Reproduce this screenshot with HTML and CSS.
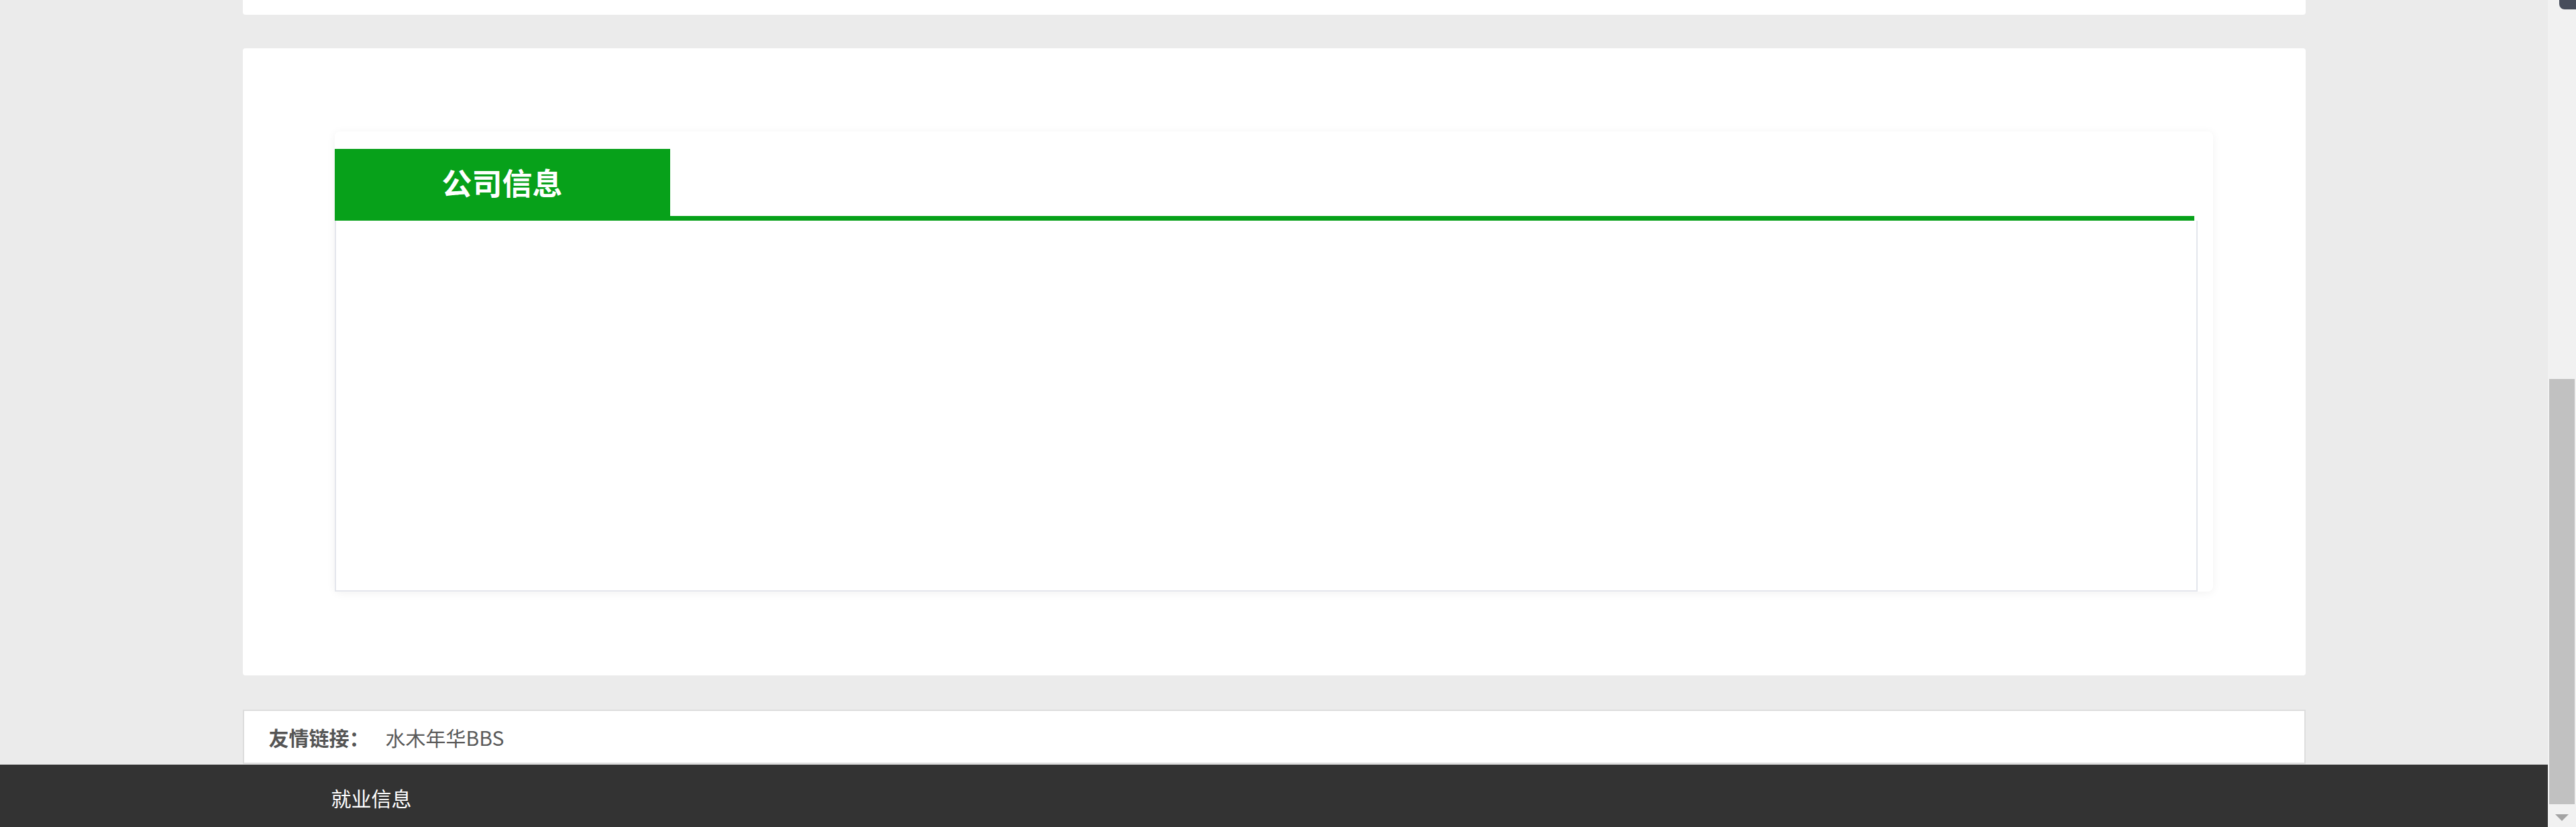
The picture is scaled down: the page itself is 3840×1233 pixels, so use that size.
FILE: index.html
```html
<!DOCTYPE html>
<html lang="zh-CN">
<head>
<meta charset="utf-8">
<title>公司信息</title>
<link rel="stylesheet" href="styles.css">
</head>
<body>
<div class="page">
  <div class="container card card-top"></div>
  <div class="container card card-main">
    <div class="panel">
      <div class="panel-head"><div class="tab">公司信息</div></div>
      <div class="panel-body"></div>
    </div>
  </div>
  <div class="container links">
    <span class="links-label">友情链接：</span><a class="links-item" href="#">水木年华BBS</a>
  </div>
  <footer class="footer">
    <div class="container footer-inner"><a class="footer-link" href="#">就业信息</a></div>
  </footer>
</div>
<div class="scrollbar">
  <div class="scroll-widget"></div>
  <div class="scroll-thumb"></div>
  <div class="scroll-arrow"></div>
</div>
</body>
</html>
```
FILE: styles.css
```css
html, body {
  margin: 0;
  padding: 0;
  height: 100%;
  overflow: hidden;
}
body {
  background: #ebebeb;
  font-family: "Noto Sans CJK SC", "Noto Sans", sans-serif;
}
a {
  text-decoration: none;
}
.page {
  width: 3798px;
}
.container {
  width: 3075px;
  margin: 0 auto;
  box-sizing: border-box;
}
.card {
  background: #fff;
}
.card-top {
  height: 22px;
  border-radius: 0 0 4px 4px;
  margin-bottom: 50px;
}
.card-main {
  border-radius: 4px;
  padding: 124px 138px 125px 137px;
  margin-bottom: 51px;
}
.panel {
  width: 2800px;
  box-sizing: border-box;
  padding-top: 26px;
  border-radius: 8px;
  background: #fff;
  box-shadow: 0 2px 14px rgba(0, 0, 0, 0.06);
}
.panel-head {
  width: 2772px;
  display: flex;
  border-bottom: 7px solid #07a11a;
}
.tab {
  width: 500px;
  height: 100px;
  line-height: 100px;
  background: #07a11a;
  color: #fff;
  font-size: 45px;
  font-weight: 700;
  text-align: center;
}
.panel-body {
  width: 2777px;
  height: 553px;
  box-sizing: border-box;
  border: 2px solid #e4e6ec;
  border-top: none;
}
.links {
  height: 81px;
  background: #fff;
  border: 2px solid #dddddd;
  padding-left: 37px;
  display: flex;
  align-items: center;
  font-size: 30px;
  color: #555;
}
.links-label {
  font-weight: 700;
  color: #555;
}
.links-item {
  margin-left: 24px;
  color: #5a5a5a;
}
.footer {
  margin-top: 1px;
  background: #333333;
  height: 300px;
}
.footer-inner {
  padding: 29px 0 0 132px;
}
.footer-link {
  color: #fff;
  font-size: 30px;
  line-height: 40px;
}
.scrollbar {
  position: fixed;
  top: 0;
  right: 0;
  width: 42px;
  height: 100%;
  background: #f1f1f1;
}
.scroll-widget {
  position: absolute;
  top: 0;
  right: 0;
  width: 25px;
  height: 14px;
  background: #474d5b;
  border-radius: 0 0 0 8px;
}
.scroll-thumb {
  position: absolute;
  top: 565px;
  left: 2px;
  width: 38px;
  height: 634px;
  background: #c1c1c1;
}
.scroll-arrow {
  position: absolute;
  top: 1214px;
  left: 11px;
  width: 0;
  height: 0;
  border-left: 10px solid transparent;
  border-right: 10px solid transparent;
  border-top: 10px solid #a3a3a3;
}
```
